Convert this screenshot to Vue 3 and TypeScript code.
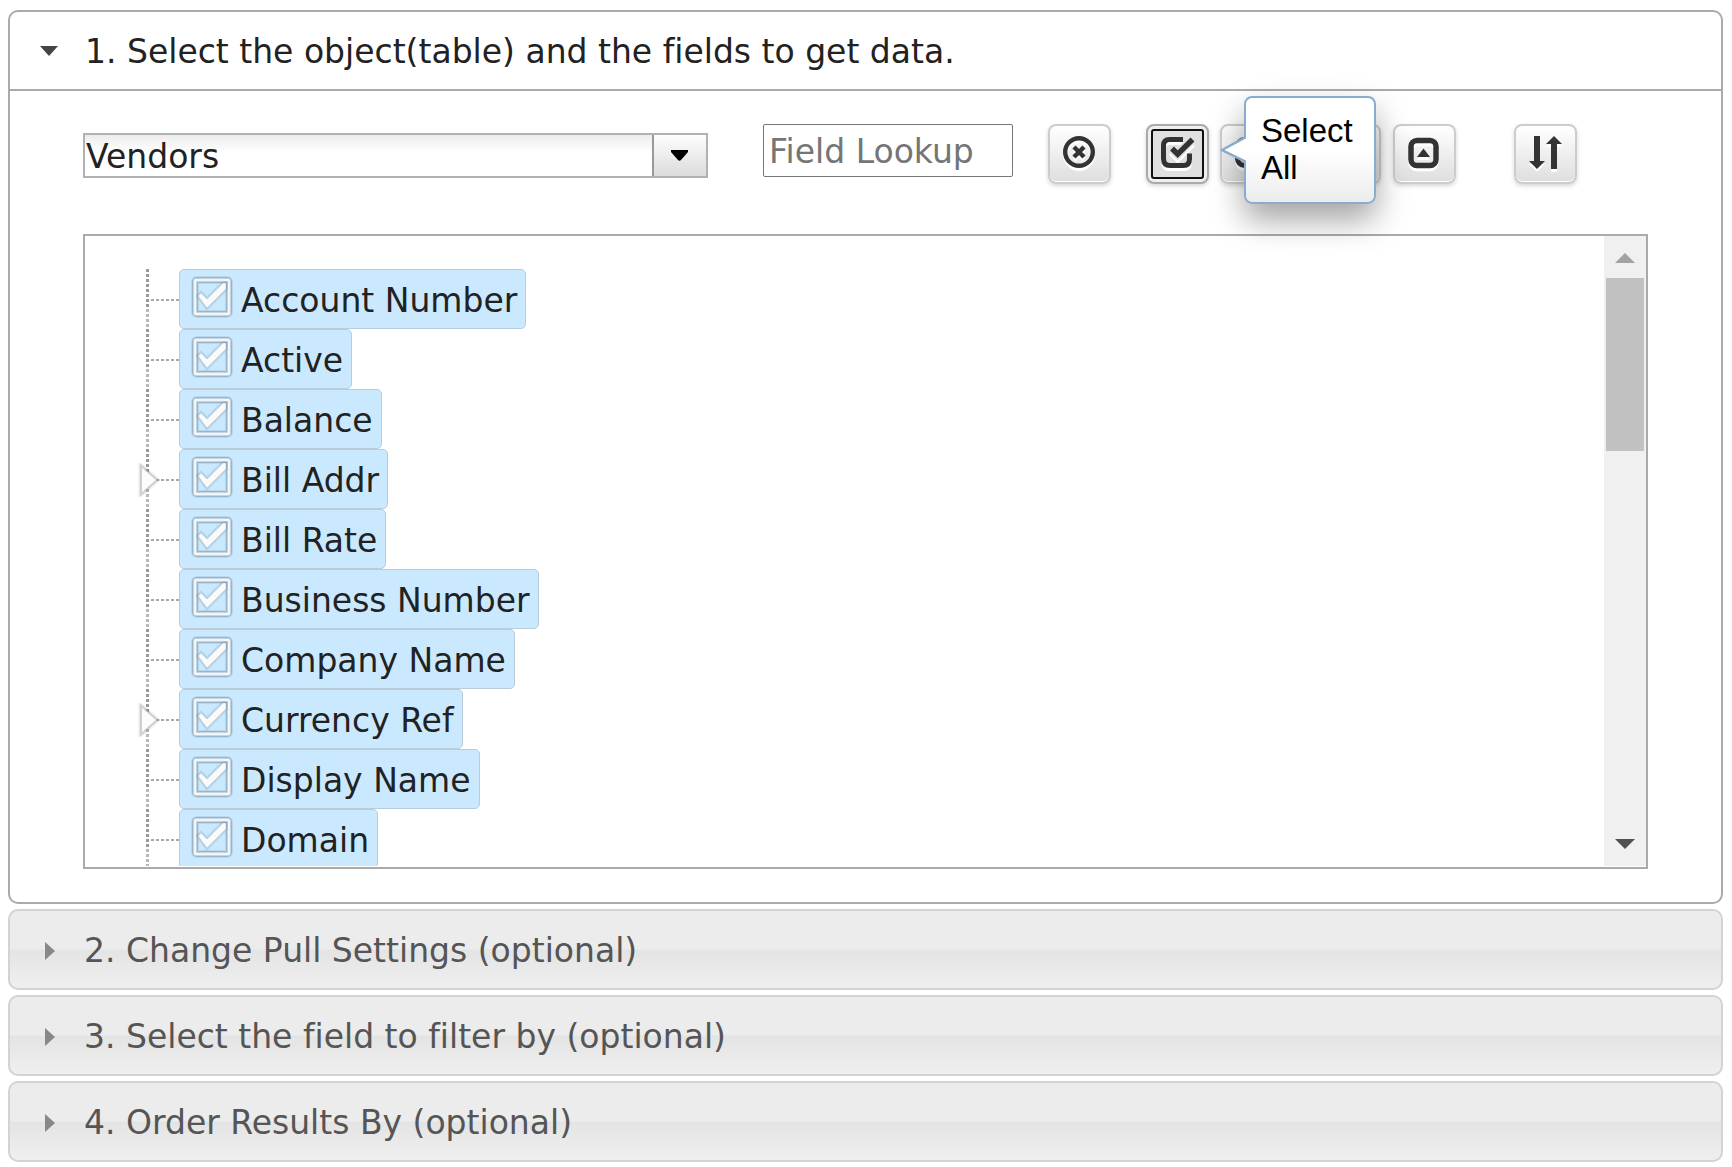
<script setup lang="ts">
import { ref } from 'vue'

interface Field {
  name: string
  expandable?: boolean
}

const fields: Field[] = [
  { name: 'Account Number' },
  { name: 'Active' },
  { name: 'Balance' },
  { name: 'Bill Addr', expandable: true },
  { name: 'Bill Rate' },
  { name: 'Business Number' },
  { name: 'Company Name' },
  { name: 'Currency Ref', expandable: true },
  { name: 'Display Name' },
  { name: 'Domain' },
]

const selected = ref<string[]>(fields.map((f) => f.name))
const lookup = ref('')
const table = ref('Vendors')
const steps = [
  '2. Change Pull Settings (optional)',
  '3. Select the field to filter by (optional)',
  '4. Order Results By (optional)',
]

function selectAll() {
  selected.value = fields.map((f) => f.name)
}
function selectNone() {
  selected.value = []
}
</script>

<template>
  <main class="accordion">
    <section class="panel">
      <button class="head open" type="button" aria-expanded="true">
        <svg class="caret" viewBox="0 0 20 20" aria-hidden="true"><path d="M1 4h18l-9 10z" fill="#454545" /></svg>
        <span>1. Select the object(table) and the fields to get data.</span>
      </button>
      <div class="body">
        <div class="toolbar">
          <div class="combo">
            <select v-model="table" aria-label="Object">
              <option>Vendors</option>
            </select>
            <span class="combo-arrow" aria-hidden="true">
              <svg viewBox="0 0 18 12"><path d="M0 0h17v2l-7 8q-1.500 1.500-3 0L0 2z" fill="#000" /></svg>
            </span>
          </div>
          <input v-model="lookup" class="lookup" type="text" placeholder="Field Lookup" aria-label="Field Lookup" />
          <button class="tool clear" type="button" aria-label="Clear lookup" @click="lookup = ''">
            <svg viewBox="0 0 36 36">
              <circle cx="18" cy="18" r="13.800" fill="none" stroke="currentColor" stroke-width="4.400" />
              <path d="M13 13l10 10M23 13L13 23" fill="none" stroke="currentColor" stroke-width="4.400" />
            </svg>
          </button>
          <div class="group">
            <div class="anchor">
              <button class="tool active" type="button" aria-label="Select All" @click="selectAll">
                <svg viewBox="0 0 36 36">
                  <path d="M24 5.500H10.500Q4.500 5.500 4.500 11.500V24.500Q4.500 31.500 11 31.500H24.500Q30.500 31.500 30.500 25V19.500" fill="none" stroke="currentColor" stroke-width="5" />
                  <path d="M13 14.500l5.700 5.700L32.500 6" fill="none" stroke="#e0e0e0" stroke-width="9" />
                  <path d="M13 14.500l5.700 5.700L33.500 5.500" fill="none" stroke="currentColor" stroke-width="5.500" />
                </svg>
              </button>
              <div class="tip" role="tooltip">
                <svg class="tip-arrow" viewBox="0 0 26 28" aria-hidden="true">
                  <path d="M26 1L2 14l24 12z" fill="#fff" />
                  <path d="M26 1L2 14l24 12" fill="none" stroke="#8aabd0" stroke-width="2.500" />
                </svg>
                <span>Select All</span>
              </div>
            </div>
            <button class="tool" type="button" aria-label="Select None" @click="selectNone">
              <svg viewBox="0 0 36 36"><rect x="4.500" y="5.500" width="26" height="26" rx="7" fill="none" stroke="currentColor" stroke-width="5" /></svg>
            </button>
          </div>
          <div class="group expanders">
            <button class="tool" type="button" aria-label="Expand All">
              <svg viewBox="0 0 36 36">
                <rect x="5.500" y="5.500" width="25" height="25" rx="7" fill="none" stroke="currentColor" stroke-width="5" />
                <path d="M12 14h12l-6 8z" fill="currentColor" />
              </svg>
            </button>
            <button class="tool" type="button" aria-label="Collapse All">
              <svg viewBox="0 0 36 36">
                <rect x="5" y="6.500" width="25" height="25" rx="6" fill="none" stroke="currentColor" stroke-width="5.500" />
                <path d="M17.500 14.500l6.500 8.500h-13z" fill="currentColor" />
              </svg>
            </button>
          </div>
          <button class="tool" type="button" aria-label="Sort">
            <svg viewBox="0 0 36 36">
              <path d="M7 2h6v25h5l-8 8-8-8h5zM24 35h6V10h5L27 2l-8 8h5z" fill="currentColor" />
            </svg>
          </button>
        </div>

        <div class="tree-box">
          <ul class="tree">
            <li v-for="f in fields" :key="f.name">
              <span class="branch">
                <svg v-if="f.expandable" class="expander" viewBox="0 0 22 34" aria-hidden="true">
                  <path d="M3 3l16 14L3 31z" fill="#fff" stroke="#000" stroke-opacity=".08" stroke-width="5" />
                  <path d="M3 3l16 14L3 31z" fill="#fbfbfb" stroke="#999" stroke-opacity=".4" stroke-width="2" />
                  <path d="M4 5l13 12L4 29z" fill="#fcfcfc" />
                </svg>
              </span>
              <label class="node">
                <input v-model="selected" type="checkbox" :value="f.name" />
                <svg class="mark" viewBox="0 0 42 42" aria-hidden="true">
                  <rect x="4" y="4" width="34" height="34" rx="2" fill="none" stroke="#6f8ea3" stroke-opacity=".2" stroke-width="8" />
                  <rect x="4" y="4" width="34" height="34" rx="2" fill="none" stroke="#6f8ea3" stroke-width="6" stroke-opacity=".45" />
                  <rect x="4" y="4" width="34" height="34" rx="1" fill="none" stroke="#f2f4f5" stroke-width="3" />
                  <g v-if="selected.includes(f.name)">
                    <path d="M7 20l3-3 6 6L32 7h3v6L16 32z" fill="none" stroke="#6f8ea3" stroke-opacity=".22" stroke-width="4" />
                    <path d="M7 20l3-3 6 6L32 7h3v6L16 32z" fill="#fafafa" stroke="#6f8ea3" stroke-opacity=".25" />
                  </g>
                </svg>
                <span>{{ f.name }}</span>
              </label>
            </li>
          </ul>
          <div class="scrollbar" aria-hidden="true">
            <svg class="up" viewBox="0 0 20 10"><path d="M0 10L10 0l10 10z" fill="#a3a3a3" /></svg>
            <div class="thumb"></div>
            <svg class="down" viewBox="0 0 20 10"><path d="M0 0h20L10 10z" fill="#505050" /></svg>
          </div>
        </div>
      </div>
    </section>

    <button v-for="s in steps" :key="s" class="head" type="button" aria-expanded="false">
      <svg class="caret" viewBox="0 0 20 20" aria-hidden="true"><path d="M7 1v18l10-9z" fill="#888" /></svg>
      <span>{{ s }}</span>
    </button>
  </main>
</template>

<style>
body {
  margin: 0;
  background: #fff;
}
</style>

<style scoped>
* {
  box-sizing: border-box;
}
.accordion {
  display: flex;
  flex-direction: column;
  gap: 5px;
  padding: 10px 9px 5px 8px;
  font-family: Verdana, 'DejaVu Sans', sans-serif;
  font-size: 33px;
  font-variant-ligatures: none;
  color: #222;
}
.panel {
  border: 2px solid #aaa;
  border-radius: 10px;
  background: #fff;
}
.head {
  display: flex;
  align-items: center;
  gap: 26px;
  width: 100%;
  height: 81px;
  padding: 2px 28px 0;
  border: 2px solid #d3d3d3;
  border-radius: 10px;
  background: linear-gradient(#ececec 0 49%, #e4e4e4 51%, #e6e6e6 60%, #efefef 100%);
  color: #555;
  font: inherit;
  font-variant-ligatures: none;
  line-height: 40px;
  text-align: left;
  white-space: nowrap;
}
.head.open {
  height: 79px;
  padding-left: 29px;
  border: 0;
  border-bottom: 2px solid #aaa;
  border-radius: 0;
  background: none;
  color: #222;
}
.caret {
  flex: none;
  width: 20px;
  height: 20px;
}
.body {
  padding: 33px 73px 33px;
}
.toolbar {
  display: flex;
  align-items: flex-start;
  height: 60px;
}
.combo {
  display: flex;
  flex: none;
  width: 625px;
  height: 45px;
  margin: 9px 55px 0 0;
  border: 2px solid #b2b2b2;
  background: linear-gradient(#ececec, #fff 18px);
}
.combo select {
  flex: 1;
  min-width: 0;
  padding: 2px 1px 0;
  border: 0;
  background: none;
  color: #222;
  font: inherit;
  appearance: none;
}
.combo-arrow {
  display: flex;
  align-items: center;
  justify-content: center;
  width: 54px;
  border-left: 2px solid #999;
  background: linear-gradient(#fdfdfd, #dcdcdc);
  pointer-events: none;
}
.combo-arrow svg {
  width: 18px;
  height: 12px;
}
.lookup {
  flex: none;
  width: 250px;
  height: 53px;
  margin-right: 35px;
  padding: 3px 5px 1px;
  border: 1px solid #767676;
  border-radius: 2px;
  background: #fff;
  color: #222;
  font: inherit;
}
.lookup::placeholder {
  color: #757575;
  opacity: 1;
}
.tool {
  display: flex;
  flex: none;
  align-items: center;
  justify-content: center;
  width: 63px;
  height: 60px;
  padding: 0 2px 4px 0;
  border: 2px solid #ccc;
  border-radius: 8px;
  background: linear-gradient(#fff, #dedede);
  box-shadow: 0 2px 4px rgba(0, 0, 0, 0.16), inset 0 -1px 0 #fff;
  color: #333;
}
.tool svg {
  width: 36px;
  height: 36px;
  filter: drop-shadow(0 3px 0 #fff);
}
.tool.active {
  border-color: #aaa;
  background: #e0e0e0;
  box-shadow: 0 2px 4px rgba(0, 0, 0, 0.16), inset 0 0 0 3px #efefef;
  outline: 2px solid #101010;
  outline-offset: -7px;
}
.clear {
  margin-right: 35px;
}
.group {
  display: flex;
  gap: 11px;
  margin-right: 35px;
}
.expanders {
  gap: 12px;
  margin-right: 58px;
}
.anchor {
  position: relative;
}
.tip {
  position: absolute;
  z-index: 2;
  top: -28px;
  left: 98px;
  width: 132px;
  height: 108px;
  padding: 14px 12px 14px 15px;
  border: 2px solid #8aabd0;
  border-radius: 8px;
  background: linear-gradient(#fff 50%, #ececec);
  box-shadow: 0 16px 32px rgba(0, 0, 0, 0.36);
  color: #000;
  font-family: Arial, 'Liberation Sans', sans-serif;
  line-height: 37px;
}
.tip-arrow {
  position: absolute;
  top: 38px;
  left: -26px;
  width: 26px;
  height: 28px;
}
.tree-box {
  display: flex;
  height: 635px;
  margin-top: 50px;
  padding-bottom: 1px;
  border: 2px solid #aaa;
}
.tree {
  flex: 1;
  margin: 0;
  padding: 33px 0 0 61px;
  overflow: hidden;
  list-style: none;
}
.tree li {
  display: flex;
  height: 60px;
  background:
    repeating-linear-gradient(#999 0 3px, transparent 3px 5px) 0 0 / 3px 40px no-repeat,
    repeating-linear-gradient(#b8b8b8 0 3px, transparent 3px 5px) 0 40px / 3px 20px no-repeat;
}
.branch {
  position: relative;
  flex: none;
  width: 33px;
  background: repeating-linear-gradient(90deg, #aaa 0 3px, transparent 3px 5px) 5px 30px / 28px 2px no-repeat;
}
.expander {
  position: absolute;
  top: 14px;
  left: -8px;
  width: 22px;
  height: 34px;
}
.node {
  position: relative;
  display: flex;
  align-items: center;
  gap: 8px;
  padding: 2px 8px 0 11px;
  border: 1px solid #b8cdd9;
  border-radius: 5px;
  background: #cbe9fe;
  white-space: nowrap;
}
.node input {
  position: absolute;
  width: 42px;
  height: 42px;
  margin: 0;
  opacity: 0;
}
.mark {
  width: 42px;
  height: 42px;
  margin-bottom: 6px;
}
.scrollbar {
  display: flex;
  flex: none;
  flex-direction: column;
  align-items: center;
  width: 42px;
  padding: 17px 2px;
  background: #f0f0f0;
}
.scrollbar svg {
  flex: none;
  width: 20px;
  height: 10px;
}
.scrollbar .down {
  margin-top: auto;
}
.thumb {
  width: 100%;
  height: 173px;
  margin-top: 15px;
  background: #c1c1c1;
}
</style>
